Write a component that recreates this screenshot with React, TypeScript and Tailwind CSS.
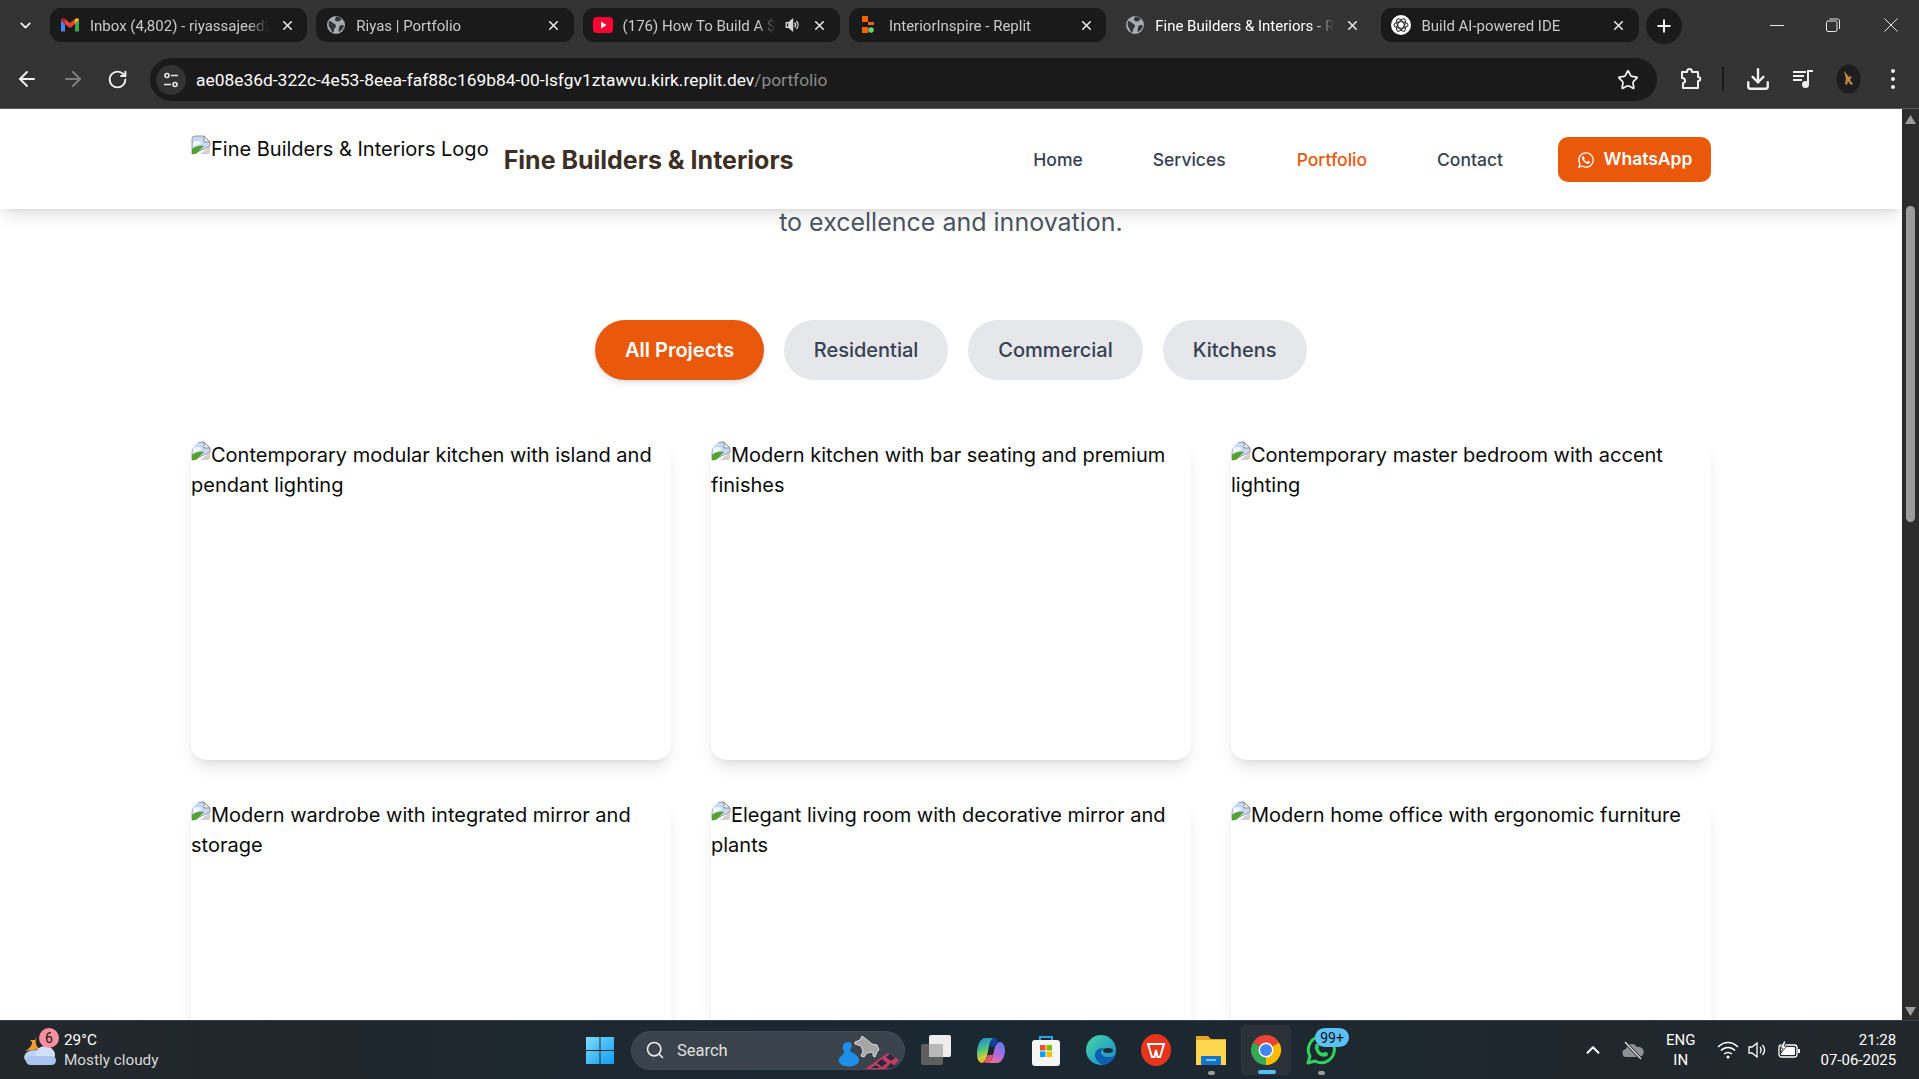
import React from "react";
import { FaWhatsapp } from "react-icons/fa";
import { ChevronDown, X, Plus, ArrowLeft, ArrowRight, RotateCw, Star, Download, Search, ChevronUp } from "lucide-react";

const GlobeIcon = () => (
  <svg width="20" height="20" viewBox="0 0 20 20" className="shrink-0">
    <circle cx="10" cy="10" r="9" fill="#a8abb0" />
    <path d="M3 6c2 0 3 1 4 2s3 1 3 3-2 2-2 4-1 3-2 2-1-3-2-4-2-3-1-7zM10 1.500c2 0 5 1 6 3-2 0-2 2-4 2s-3-1-3-2 1-2 1-3zM15 10c1 0 3 0 3 1-1 3-3 5-5 6-1-1 0-3 0-4s1-3 2-3z" fill="#33353a" />
  </svg>
);
const Gmail = () => (
  <svg width="20" height="20" viewBox="0 0 20 20" className="shrink-0">
    <path d="M1 5v11.500h4V9z" fill="#4285f4" />
    <path d="M15 9v7.500h4V5z" fill="#34a853" />
    <path d="M5 9V4l5 4 5-4v5l-5 4z" fill="#ea4335" />
    <path d="M1 5c0-2 2-2.500 4-1v5z" fill="#c5221f" />
    <path d="M19 5c0-2-2-2.500-4-1v5z" fill="#fbbc04" />
  </svg>
);
const YouTube = () => (
  <svg width="20" height="20" viewBox="0 0 20 20" className="shrink-0">
    <rect x="0" y="2" width="20" height="16" rx="4" fill="#ff0033" />
    <path d="M8 6.500v7l5.500-3.500z" fill="#fff" />
  </svg>
);
const Replit = () => (
  <svg width="20" height="20" viewBox="0 0 20 20" className="shrink-0">
    <rect x="3" y="1" width="6" height="6" fill="#f26207" />
    <rect x="9" y="7" width="6" height="3" fill="#f26207" />
    <rect x="3" y="12" width="6" height="6" fill="#f26207" />
    <circle cx="12" cy="15" r="2.800" fill="#63d471" />
  </svg>
);
const OpenAI = () => (
  <svg width="20" height="20" viewBox="0 0 20 20" className="shrink-0">
    <circle cx="10" cy="10" r="10" fill="#fff" />
    <g fill="none" stroke="#333" strokeWidth="1.100">
      <ellipse cx="10" cy="10" rx="7" ry="3.200" />
      <ellipse cx="10" cy="10" rx="7" ry="3.200" transform="rotate(60 10 10)" />
      <ellipse cx="10" cy="10" rx="7" ry="3.200" transform="rotate(120 10 10)" />
    </g>
  </svg>
);
const Speaker = ({ size = 16 }: { size?: number }) => (
  <svg width={size} height={size} viewBox="0 0 18 18" fill="none" stroke="#d6d6d6" strokeWidth="1.500" className="shrink-0">
    <path d="M2.500 6.500h3l4-3.500v12l-4-3.500h-3z" fill="none" />
    <path d="M5.500 6.500l4-3.500v12l-4-3.500z" fill="#d6d6d6" />
    <path d="M12 6.500c1.300 1.500 1.300 3.500 0 5M14 4.500c2.300 2.600 2.300 6.400 0 9" />
  </svg>
);

function Tab({ icon, label, active, audio }: { icon: React.ReactNode; label: string; active?: boolean; audio?: boolean }) {
  return (
    <div className={`flex h-[34px] w-[257.300px] shrink-0 items-center rounded-[11px] pl-[10px] pr-[10px] ${active ? "bg-[#333333]" : "bg-[#1a1a1a]"}`}>
      <span className="flex w-[30px] shrink-0 items-center">{icon}</span>
      <span className={`min-w-0 flex-1 overflow-hidden whitespace-nowrap pt-[1px] text-[15px] leading-[20px] [mask-image:linear-gradient(90deg,#000_88%,transparent)] ${active ? "text-white" : "text-[#c9c9c9]"}`}>{label}</span>
      {audio && <span className="ml-[8px] mr-[2px]"><Speaker /></span>}
      <span className="ml-[8px] flex w-[20px] shrink-0 justify-center"><X size={15} strokeWidth={2.6} color="#e4e4e4" /></span>
    </div>
  );
}

const SiteSettings = () => (
  <svg width="18" height="18" viewBox="0 0 18 18" fill="none" stroke="#e8e8e8" strokeWidth="1.600">
    <circle cx="5" cy="4.500" r="2" />
    <path d="M9 4.500h7M2 13.500h7" />
    <circle cx="13" cy="13.500" r="2" />
  </svg>
);
const Puzzle = () => (
  <svg width="22" height="24" viewBox="0 0 22 24" fill="none" stroke="#f0f0f0" strokeWidth="2">
    <path d="M2 5h5c0-4 5-4 5 0h6v5c3 0 3 4 0 4v7H3v-5c3 0 3-5-1-5z" strokeLinejoin="round" />
  </svg>
);
const MusicList = () => (
  <svg width="22" height="22" viewBox="0 0 22 22" fill="none" stroke="#f0f0f0" strokeWidth="2">
    <path d="M1 4h13M1 8h11M1 12h9" />
    <path d="M16 16V3h5" />
    <circle cx="13.500" cy="16.500" r="2.500" fill="#f0f0f0" />
  </svg>
);
const Avatar = () => (
  <svg width="25" height="30" viewBox="0 0 25 30">
    <ellipse cx="12.500" cy="15" rx="12" ry="14.500" fill="#1d1c1e" />
    <path d="M8 7l5 6 3-1-2 4 3 4-2 1-3-4-1 4-2-1 1-5z" fill="#c48b3d" />
  </svg>
);
const Dots = () => (
  <svg width="6" height="22" viewBox="0 0 6 22" fill="#f0f0f0">
    <circle cx="3" cy="3" r="2" /><circle cx="3" cy="11" r="2" /><circle cx="3" cy="19" r="2" />
  </svg>
);

const BrokenImg = () => (
  <svg width="20" height="20" viewBox="0 0 20 20" className="inline-block align-[1px]">
    <path d="M1 4a3 3 0 0 1 3-3h9l6 6v4L2 19H1z" fill="#c6daf6" stroke="#8f8f8f" strokeWidth="0.900" />
    <path d="M13 1v6h6z" fill="#eeeeee" stroke="#858585" strokeWidth="0.900" />
    <path d="M2 8c2-2 5-3 9 0L2 12z" fill="#f4f8fe" />
    <path d="M1 19v-5c3-3 8-4 12-3L5 19z" fill="#54a32f" />
    <path d="M9 19l10-8v6a2 2 0 0 1-2 2z" fill="#bdbdbd" fillOpacity="0.7" />
  </svg>
);

const Card = ({ alt }: { alt: string }) => (
  <div className="h-[320px] overflow-hidden rounded-[15px] bg-white shadow-lg">
    <div className="text-[20px] leading-[30px] text-[#0a0a0a]"><BrokenImg />{alt}</div>
  </div>
);

const cards = [
  "Contemporary modular kitchen with island and pendant lighting",
  "Modern kitchen with bar seating and premium finishes",
  "Contemporary master bedroom with accent lighting",
  "Modern wardrobe with integrated mirror and storage",
  "Elegant living room with decorative mirror and plants",
  "Modern home office with ergonomic furniture",
];

const Weather = () => (
  <div className="relative h-[40px] w-[40px] shrink-0">
    <svg width="40" height="40" viewBox="0 0 40 40" className="absolute left-0 top-0">
      <path d="M16 6c-2 5-2 10 3 13l-15 2c4-2 7-5 7-9l-2-2 5 0z" fill="#f29b2e" />
      <ellipse cx="14" cy="27" rx="11" ry="7" fill="#b9d2f5" />
      <ellipse cx="24" cy="25" rx="10" ry="9" fill="#cfe0f8" />
      <rect x="5" y="26" width="30" height="9" rx="4.500" fill="#a9c5f0" />
    </svg>
    <span className="absolute left-[18px] top-[-2px] flex h-[20px] w-[20px] items-center justify-center rounded-full bg-[#f98f9f] text-[14px] leading-none text-[#1a1a1a]">6</span>
  </div>
);

const WinLogo = () => (
  <svg width="30" height="30" viewBox="0 0 30 30">
    <defs>
      <linearGradient id="wl" x1="0" y1="0" x2="1" y2="1"><stop offset="0" stopColor="#7fdcfb" /><stop offset="1" stopColor="#0f9cf5" /></linearGradient>
    </defs>
    <path d="M1 2h13.500v13H1zM15.500 2H29v13H15.500zM1 16h13.500v13H1zM15.500 16H29v13H15.500z" fill="url(#wl)" />
  </svg>
);
const SearchArt = () => (
  <svg width="64" height="39" viewBox="0 0 64 39" className="shrink-0">
    <path d="M10 11c3 0 5 3 3 6l-1 3 5 3c4 3 5 6 3 9-2 3-8 4-13 3-5-1-7-4-6-7 1-3 4-4 5-6l0-2c-3-3-1-9 4-9z" fill="#1e8fe8" />
    <path d="M17 11l5-2 2-4 4 3 6 5 5 1 2 5-2 2-2 5-2-1 0-4-6 1-3 4-3-1 2-5-2-5-6-2z" fill="#a6a6a6" stroke="#d9d9d9" strokeWidth="1" />
    <path d="M27 38L50 22l11 7-8 9z" fill="#c13b63" />
    <path d="M39 32l5-4 5 4-5 4zM48 26l4-3 5 4-4 3zM33 37l5-3 4 3zM48 37l5-5 4 3-4 3z" fill="#2a2740" />
  </svg>
);
const TaskView = () => (
  <svg width="32" height="32" viewBox="0 0 32 32">
    <rect x="1" y="10" width="22" height="21" rx="2" fill="#5f5f5f" />
    <rect x="9" y="1" width="22" height="22" rx="2" fill="#ededed" />
    <rect x="9" y="10" width="14" height="13" fill="#b9b9b9" />
  </svg>
);
const Copilot = () => (
  <svg width="28" height="27" viewBox="0 0 28 27">
    <defs>
      <linearGradient id="c1" x1="0" y1="0" x2="0.300" y2="1"><stop offset="0" stopColor="#1d7fd8" /><stop offset="0.45" stopColor="#3fc08f" /><stop offset="0.8" stopColor="#c9d13a" /><stop offset="1" stopColor="#f5a623" /></linearGradient>
      <linearGradient id="c2" x1="0.800" y1="0" x2="0.200" y2="1"><stop offset="0" stopColor="#5a7cf0" /><stop offset="0.5" stopColor="#b06ae0" /><stop offset="1" stopColor="#f0708a" /></linearGradient>
    </defs>
    <path d="M8 1h10c-3 0-5 3-6 8l-2 10c-1 4-3 7-5 7-3 0-5-4-5-9C0 9 3 1 8 1z" fill="url(#c1)" />
    <path d="M20 26H10c3 0 5-3 6-8l2-8c1-3 3-5 5-5 3 0 5 4 5 8 0 6-3 13-8 13z" fill="url(#c2)" />
    <path d="M12 9c1-5 3-8 6-8 2 0 3 2 3 4-2 1-3 2-4 5z" fill="#173f9e" />
    <path d="M16 18c-1 5-3 8-6 8-2 0-3-1-3-3 2 0 3-2 4-5z" fill="#e0546f" />
  </svg>
);
const Store = () => (
  <svg width="30" height="32" viewBox="0 0 30 32">
    <path d="M9 7V3h12v4" fill="none" stroke="#2aa7e8" strokeWidth="2" />
    <rect x="1" y="6" width="28" height="26" rx="3" fill="#f5f5f5" />
    <rect x="9" y="11" width="5.500" height="5.500" fill="#f25022" />
    <rect x="15.500" y="11" width="5.500" height="5.500" fill="#7fba00" />
    <rect x="9" y="17.500" width="5.500" height="5.500" fill="#00a4ef" />
    <rect x="15.500" y="17.500" width="5.500" height="5.500" fill="#ffb900" />
  </svg>
);
const Edge = () => (
  <svg width="30" height="30" viewBox="0 0 30 30">
    <defs>
      <linearGradient id="e1" x1="0" y1="0" x2="1" y2="1"><stop offset="0" stopColor="#47d6a0" /><stop offset="1" stopColor="#1387d8" /></linearGradient>
    </defs>
    <circle cx="15" cy="15" r="15" fill="url(#e1)" />
    <path d="M30 17c0 3-3 5-7 5-5 0-8-2-8-5 0-2 2-3 4-3-5-2-10 1-10 6 0 5 5 10 10 10-2 0 11-3 11-13z" fill="#0b5fae" />
    <ellipse cx="22" cy="15.500" rx="5" ry="2.500" fill="#1f2a33" />
  </svg>
);
const Wps = () => (
  <svg width="30" height="32" viewBox="0 0 30 32">
    <ellipse cx="15" cy="16" rx="15" ry="16" fill="#e8341c" />
    <path d="M7 10h16l-4 13h-2.500L15 16l-1.500 7H11z" fill="none" stroke="#fff" strokeWidth="2" />
  </svg>
);
const Folder = () => (
  <svg width="32" height="32" viewBox="0 0 32 32">
    <path d="M1 2h12l3 3h15v6H1z" fill="#e0a526" />
    <rect x="1" y="6" width="30" height="25" fill="#fcd74f" />
    <rect x="6" y="22" width="20" height="9" rx="1" fill="#1673c7" />
    <rect x="11" y="25" width="10" height="2" fill="#7cc4f4" />
  </svg>
);
const Chrome = () => (
  <svg width="30" height="30" viewBox="0 0 30 30">
    <path d="M15 15L2 7.500A15 15 0 0 1 28 7.500z" fill="#ea4335" />
    <path d="M15 15L28 7.500A15 15 0 0 1 15 30z" fill="#fbbc04" />
    <path d="M15 15L15 30A15 15 0 0 1 2 7.500z" fill="#34a853" />
    <circle cx="15" cy="15" r="7.500" fill="#fff" />
    <circle cx="15" cy="15" r="6" fill="#4285f4" />
  </svg>
);
const Wa = () => (
  <svg width="32" height="32" viewBox="0 0 32 32" fill="none">
    <path d="M3 29l2-7a13 13 0 1 1 5 5z" stroke="#2fd25c" strokeWidth="3" strokeLinejoin="round" />
    <path d="M11 10c2-2 3 2 3 3s-1 1 0 3 3 3 4 3 1-2 3-1 3 2 1 4c-3 2-8 0-10-3s-3-7-1-9z" fill="#2fd25c" />
  </svg>
);

function TaskIcon({ children, dot, active, badge }: { children: React.ReactNode; dot?: boolean; active?: boolean; badge?: boolean }) {
  return (
    <div className={`relative flex h-[50px] w-[50px] shrink-0 items-center justify-center rounded-[5px] ${active ? "border border-[#2d353c] bg-[#2a3138]" : ""}`}>
      {children}
      {dot && <span className="absolute bottom-0 left-[22px] h-[4px] w-[7px] rounded-full bg-[#9a9a9a]" />}
      {active && <span className="absolute bottom-0 left-[16px] h-[4px] w-[18px] rounded-full bg-[#4cc2ff]" />}
      {badge && <span className="absolute left-[19px] top-[3px] flex h-[19px] w-[34px] items-center justify-center rounded-full bg-[#5cc0f7] text-[14px] leading-none text-[#111]">99+</span>}
    </div>
  );
}

const OneDrive = () => (
  <svg width="22" height="20" viewBox="0 0 22 20">
    <path d="M5 17a4 4 0 0 1-1-8 6 6 0 0 1 11-2 5 5 0 0 1 3 10z" fill="#8e9195" />
    <path d="M3 2l16 17" stroke="#202a30" strokeWidth="3" />
    <path d="M3 2l16 17" stroke="#e8e8e8" strokeWidth="1.200" />
  </svg>
);
const Wifi = () => (
  <svg width="22" height="18" viewBox="0 0 22 18" fill="none" stroke="#fff" strokeWidth="1.500">
    <path d="M1 6c6-6 14-6 20 0M4 9.500c4-4 10-4 14 0M7 13c2.500-2 5.500-2 8 0" />
    <circle cx="11" cy="16" r="1.500" fill="#fff" stroke="none" />
  </svg>
);
const Sound = () => (
  <svg width="20" height="18" viewBox="0 0 20 18" fill="none" stroke="#fff" strokeWidth="1.300">
    <path d="M1 6h3l5-4v14l-5-4H1z" />
    <path d="M12 6c1.500 2 1.500 4 0 6M14.500 4c2.500 3 2.500 7 0 10" />
  </svg>
);
const Battery = () => (
  <svg width="22" height="18" viewBox="0 0 22 18" fill="none">
    <rect x="1" y="4" width="18" height="12" rx="2.500" stroke="#fff" strokeWidth="1.300" />
    <rect x="3" y="6" width="14" height="8" rx="1" fill="#fff" />
    <rect x="20" y="8" width="2" height="4" fill="#fff" />
    <path d="M6 0L2 7h3L3 12l6-7H6l2-5z" fill="#fff" stroke="#222a30" strokeWidth="0.800" />
  </svg>
);

export default function App() {
  return (
    <div className="flex h-screen w-full flex-col overflow-hidden bg-white font-['Inter',sans-serif]">
      <div className="font-['Roboto','Open_Sans',sans-serif]">
        <div className="flex h-[54px] items-start bg-[#333333] pt-[8px]">
          <div className="flex h-[34px] w-[50px] shrink-0 items-center justify-center"><ChevronDown size={17} strokeWidth={2.6} color="#f0f0f0" /></div>
          <div className="flex gap-[9px]">
            <Tab icon={<Gmail />} label="Inbox (4,802) - riyassajeed2" />
            <Tab icon={<GlobeIcon />} label="Riyas | Portfolio" />
            <Tab icon={<YouTube />} label="(176) How To Build A $" audio />
            <Tab icon={<Replit />} label="InteriorInspire - Replit" />
            <Tab icon={<GlobeIcon />} label="Fine Builders & Interiors - Replit" active />
            <Tab icon={<OpenAI />} label="Build AI-powered IDE" />
          </div>
          <div className="ml-[7px] flex h-[36px] w-[36px] shrink-0 items-center justify-center rounded-full bg-[#1a1a1a]"><Plus size={20} strokeWidth={2.4} color="#f0f0f0" /></div>
          <div className="ml-[80px] flex h-[34px] w-[30px] items-center justify-center"><span className="h-px w-[14px] bg-[#e8e8e8]" /></div>
          <div className="ml-[26px] flex h-[34px] w-[30px] items-center justify-center">
            <svg width="14" height="14" viewBox="0 0 14 14" fill="none" stroke="#e8e8e8" strokeWidth="1"><rect x="0.500" y="3" width="10.500" height="10.500" rx="1.500" /><path d="M3.500 1h8a2 2 0 0 1 2 2v8" /></svg>
          </div>
          <div className="ml-[28px] flex h-[34px] w-[30px] items-center justify-center">
            <svg width="14" height="14" viewBox="0 0 14 14" stroke="#e8e8e8" strokeWidth="1"><path d="M0.500 0.500l13 13M13.500 0.500l-13 13" /></svg>
          </div>
        </div>
        <div className="flex h-[54px] items-start bg-[#333333] pt-[4px]">
          <div className="flex w-[150px] shrink-0 items-center pl-[15px] pt-[9px]">
            <ArrowLeft size={24} strokeWidth={2} color="#f0f0f0" />
            <span className="ml-[22px]"><ArrowRight size={24} strokeWidth={2} color="#7d7d7d" /></span>
            <span className="ml-[22px]"><RotateCw size={21} strokeWidth={2.2} color="#f0f0f0" /></span>
          </div>
          <div className="flex h-[43px] w-[1507px] shrink-0 items-center rounded-full bg-[#1a1a1a] pl-[6px] pr-[18px]">
            <div className="flex h-[30px] w-[30px] shrink-0 items-center justify-center rounded-full bg-[#333333]"><SiteSettings /></div>
            <div className="ml-[10px] flex-1 whitespace-nowrap pt-[1px] text-[17.400px] leading-[24px] text-white">ae08e36d-322c-4e53-8eea-faf88c169b84-00-lsfgv1ztawvu.kirk.replit.dev<span className="text-[#8a8a8a]">/portfolio</span></div>
            <Star size={22} strokeWidth={1.900} color="#f0f0f0" />
          </div>
          <div className="flex flex-1 items-center pt-[6px]">
            <span className="ml-[23px]"><Puzzle /></span>
            <span className="ml-[20px] h-[24px] w-[2px] bg-[#1a1a1a]" />
            <span className="ml-[21px]"><Download size={26} strokeWidth={2.200} color="#f0f0f0" /></span>
            <span className="ml-[21px]"><MusicList /></span>
            <span className="ml-[22px]"><Avatar /></span>
            <span className="ml-[29px]"><Dots /></span>
          </div>
        </div>
      </div>
      <div className="h-px bg-[#5a5a5a]" />
      <div className="flex min-h-0 flex-1">
        <div className="min-w-0 flex-1 overflow-hidden">
          <header className="relative z-10 flex h-[100px] items-start justify-center bg-white shadow-lg">
            <div className="flex h-full w-[1520px] items-center justify-between pt-[1px]">
              <div className="flex items-center">
                <div className="mb-[21px] whitespace-nowrap text-[20px] leading-[30px] text-[#0a0a0a]"><BrokenImg />Fine Builders &amp; Interiors Logo</div>
                <div className="ml-[15px] whitespace-nowrap text-[25px] font-bold leading-[30px] text-[#3e2f25]">Fine Builders &amp; Interiors</div>
              </div>
              <nav className="flex items-center text-[17.500px] font-medium text-[#374151]">
                <span className="pt-[1px]">Home</span>
                <span className="ml-[70px] pt-[1px]">Services</span>
                <span className="ml-[71px] pt-[1px] text-[#ea580c]">Portfolio</span>
                <span className="ml-[70px] pt-[1px]">Contact</span>
                <span className="ml-[55px] flex h-[45px] w-[153px] items-center justify-center gap-[9px] rounded-[10px] bg-[#ea580c] text-[17.500px] font-semibold text-white"><FaWhatsapp size={18} />WhatsApp</span>
              </nav>
            </div>
          </header>
          <main className="mx-auto -mt-[7px] w-[1520px]">
            <p className="text-center text-[25px] leading-[40px] text-[#4b5563]">to excellence and innovation.</p>
            <div className="mt-[78px] flex justify-center gap-[20px]">
              <button className="h-[60px] rounded-full bg-[#ea580c] px-[29.500px] text-[20px] font-semibold text-white shadow-md">All Projects</button>
              <button className="h-[60px] rounded-full bg-[#e5e7eb] px-[30px] text-[20px] font-medium text-[#374151]">Residential</button>
              <button className="h-[60px] rounded-full bg-[#e5e7eb] px-[30px] text-[20px] font-medium text-[#374151]">Commercial</button>
              <button className="h-[60px] rounded-full bg-[#e5e7eb] px-[30px] text-[20px] font-medium text-[#374151]">Kitchens</button>
            </div>
            <div className="mt-[60px] grid grid-cols-3 gap-[40px]">
              {cards.map((c) => <Card key={c} alt={c} />)}
            </div>
          </main>
        </div>
        <div className="flex w-[17px] shrink-0 flex-col items-center bg-[#2c2c2c]">
          <svg width="11" height="9" viewBox="0 0 11 9" className="mt-[6px] shrink-0"><path d="M5.500 0L11 9H0z" fill="#9c9c9c" /></svg>
          <div className="mt-[82px] h-[316px] w-[9px] rounded-full bg-[#9c9c9c]" />
          <div className="flex-1" />
          <svg width="11" height="9" viewBox="0 0 11 9" className="mb-[4px] shrink-0"><path d="M5.500 9L11 0H0z" fill="#9c9c9c" /></svg>
        </div>
      </div>
      <div className="flex h-[59px] shrink-0 items-center border-t border-[#3a3f44] bg-gradient-to-r from-[#22272b] via-[#1a2832] to-[#22272b] font-['Roboto','Open_Sans',sans-serif] text-white">
        <div className="flex w-[585px] shrink-0 items-center pl-[21px]">
          <Weather />
          <div className="ml-[3px] text-[15.300px] leading-[20px]">
            <div>29°C</div>
            <div className="text-[#d8d8d8]">Mostly cloudy</div>
          </div>
        </div>
        <WinLogo />
        <div className="ml-[16px] flex h-[39px] w-[274px] shrink-0 items-center overflow-hidden rounded-full border border-[#444c53] bg-[#3a434b] pl-[13px] pr-[2px]">
          <Search size={20} strokeWidth={2} color="#e8e8e8" />
          <span className="ml-[12px] flex-1 pt-[2px] text-[16.500px] text-[#e0e0e0]">Search</span>
          <SearchArt />
        </div>
        <div className="ml-[6px] flex gap-[5px]">
          <TaskIcon><TaskView /></TaskIcon>
          <TaskIcon><Copilot /></TaskIcon>
          <TaskIcon><Store /></TaskIcon>
          <TaskIcon><Edge /></TaskIcon>
          <TaskIcon><Wps /></TaskIcon>
          <TaskIcon dot><Folder /></TaskIcon>
          <TaskIcon active><Chrome /></TaskIcon>
          <TaskIcon dot badge><Wa /></TaskIcon>
        </div>
        <div className="flex flex-1 items-center pl-[236px]">
          <ChevronUp size={22} strokeWidth={2.2} color="#fff" />
          <span className="ml-[18px]"><OneDrive /></span>
          <div className="ml-[22px] text-center text-[15px] leading-[20px]"><div>ENG</div><div>IN</div></div>
          <span className="ml-[22px]"><Wifi /></span>
          <span className="ml-[9px]"><Sound /></span>
          <span className="ml-[10px]"><Battery /></span>
          <div className="ml-[20px] text-right text-[15px] leading-[20px]"><div>21:28</div><div>07-06-2025</div></div>
        </div>
      </div>
    </div>
  );
}
